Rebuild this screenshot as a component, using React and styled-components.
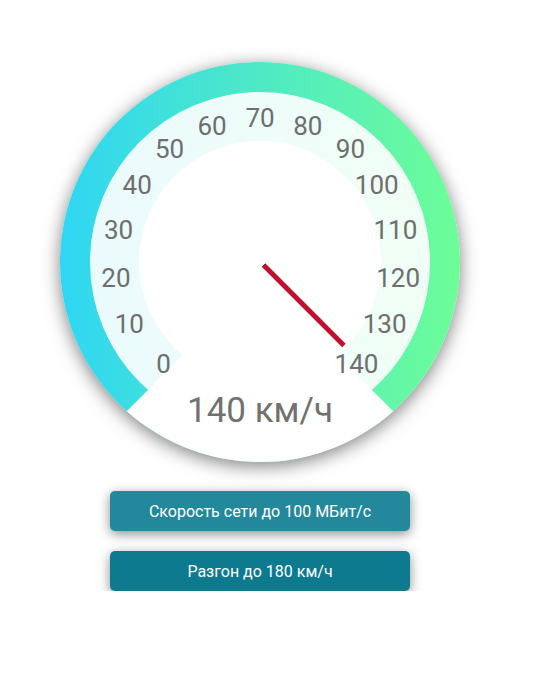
import styled, { createGlobalStyle } from 'styled-components';

const GlobalStyle = createGlobalStyle`
  html, body {
    margin: 0;
    padding: 0;
    background: #fff;
    font-family: Roboto, 'Liberation Sans', sans-serif;
  }
`;

const Page = styled.div`
  width: 400px;
  padding: 62px 0 0 60px;
  display: flex;
  flex-direction: column;
  align-items: center;
`;

const Dial = styled.div`
  position: relative;
  width: 400px;
  height: 400px;
  border-radius: 50%;
  overflow: hidden;
  background: linear-gradient(90deg, #2fd6f3 0%, #6dfd97 100%);
  box-shadow: 0 4px 18px rgba(0, 0, 0, 0.5);
  display: flex;
  align-items: center;
  justify-content: center;
`;

const Ring = styled.div`
  width: 340px;
  height: 340px;
  border-radius: 50%;
  background: radial-gradient(
    circle,
    rgba(255, 255, 255, 0.9) 68%,
    rgba(255, 255, 255, 0.79) 100%
  );
  display: flex;
  align-items: center;
  justify-content: center;
`;

const Face = styled.div`
  width: 242px;
  height: 242px;
  border-radius: 50%;
  background: #fff;
`;

/* white sector at the bottom, apex slightly below the centre */
const Wedge = styled.div`
  position: absolute;
  inset: 0;
  background: #fff;
  clip-path: polygon(200px 216px, 420px 436px, -20px 436px);
`;

const Mark = styled.span`
  position: absolute;
  transform: translate(-50%, -50%);
  font-size: 26px;
  line-height: 1;
  color: #6e6e6e;
  white-space: nowrap;
`;

const Needle = styled.div`
  position: absolute;
  left: 197.5px;
  top: ${200 - 118}px;
  width: 5px;
  height: 118px;
  transform-origin: 50% 100%;
  transform: rotate(${({ angle }) => angle}deg);
  background: linear-gradient(to top, transparent 4px, #c1102f 4px);
`;

const Readout = styled.div`
  position: absolute;
  left: 0;
  right: 0;
  top: 331px;
  text-align: center;
  font-size: 35px;
  line-height: 1;
  color: #717171;
`;

const Buttons = styled.div`
  margin-top: 29px;
  display: flex;
  flex-direction: column;
  gap: 20px;
`;

const Button = styled.button`
  width: 300px;
  height: 40px;
  border: none;
  border-radius: 5px;
  background: ${({ dark }) => (dark ? '#0d7a8f' : '#23889c')};
  color: #fff;
  font-family: Roboto, 'Liberation Sans', sans-serif;
  font-size: 16px;
  box-shadow: 0 3px 12px rgba(0, 0, 0, 0.45);
  cursor: pointer;
`;

const speed = 140;
const marks = Array.from({ length: 15 }, (_, i) => i * 10);
const toAngle = (v) => -135 + (v / 140) * 270;

export default function App() {
  return (
    <>
      <GlobalStyle />
      <Page>
        <Dial>
          <Ring>
            <Face />
          </Ring>
          <Wedge />
          {marks.map((v) => {
            const a = (toAngle(v) * Math.PI) / 180;
            // labels sit a little to the left the more digits they have
            const shift = (String(v).length - 2) * 6;
            return (
              <Mark
                key={v}
                style={{
                  left: 200 + 145 * Math.sin(a) - shift,
                  top: 200 - 144 * Math.cos(a),
                }}
              >
                {v}
              </Mark>
            );
          })}
          <Needle angle={toAngle(speed)} />
          <Readout>{speed} км/ч</Readout>
        </Dial>
        <Buttons>
          <Button>Скорость сети до 100 МБит/с</Button>
          <Button dark>Разгон до 180 км/ч</Button>
        </Buttons>
      </Page>
    </>
  );
}
